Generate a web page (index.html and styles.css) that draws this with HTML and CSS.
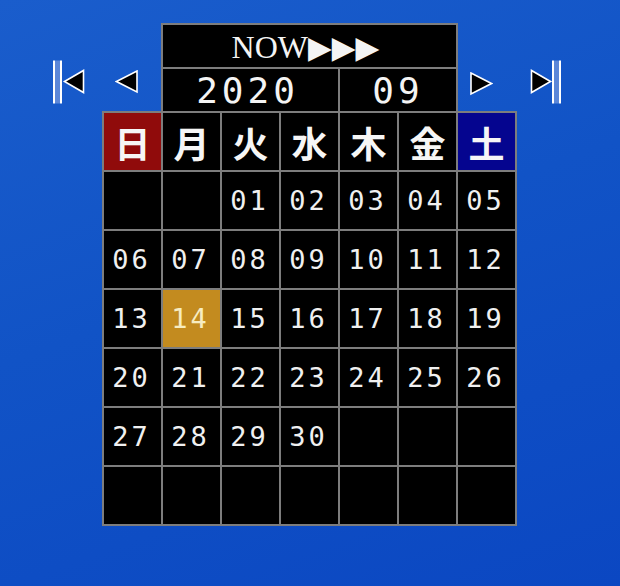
FILE: index.html
```html
<!DOCTYPE html>
<html lang="ja">
<head>
<meta charset="utf-8">
<title>Calendar</title>
<link rel="stylesheet" href="styles.css">
</head>
<body>
<div class="cal">
  <div class="top">
    <div class="nav nav-left">
      <svg class="skip" width="33" height="44" viewBox="0 0 33 44">
        <rect x="1" y="0.5" width="2" height="43" fill="#fff"/>
        <rect x="3" y="0.5" width="5" height="43" fill="#5c87d8"/>
        <rect x="8" y="0.5" width="2" height="43" fill="#fff"/>
        <polygon points="12.5,21.5 31.5,10.5 31.5,32.5" fill="#000" stroke="#fff" stroke-width="1.6" stroke-linejoin="miter"/>
      </svg>
      <svg class="step step-prev" width="24" height="24" viewBox="0 0 24 24">
        <polygon points="1.5,11.5 22,1 22,22" fill="#000" stroke="#fff" stroke-width="1.6"/>
      </svg>
    </div>
    <div class="box">
      <div class="cell now">NOW<span class="tri">▶▶▶</span></div>
      <div class="cell year">2020</div>
      <div class="cell month">09</div>
    </div>
    <div class="nav nav-right">
      <svg class="step step-next" width="24" height="24" viewBox="0 0 24 24">
        <polygon points="22.5,11.5 2,1 2,22" fill="#000" stroke="#fff" stroke-width="1.6"/>
      </svg>
      <svg class="skip skip-next" width="33" height="44" viewBox="0 0 33 44">
        <polygon points="20.5,21.5 1.5,10.5 1.5,32.5" fill="#000" stroke="#fff" stroke-width="1.6" stroke-linejoin="miter"/>
        <rect x="22" y="0.5" width="2" height="43" fill="#fff"/>
        <rect x="24" y="0.5" width="5" height="43" fill="#5c87d8"/>
        <rect x="29" y="0.5" width="2" height="43" fill="#fff"/>
      </svg>
    </div>
  </div>
  <div class="grid">
    <div class="wd sun">日</div>
    <div class="wd">月</div>
    <div class="wd">火</div>
    <div class="wd">水</div>
    <div class="wd">木</div>
    <div class="wd">金</div>
    <div class="wd sat">土</div>

    <div class="d"></div><div class="d"></div><div class="d">01</div><div class="d">02</div><div class="d">03</div><div class="d">04</div><div class="d">05</div>
    <div class="d">06</div><div class="d">07</div><div class="d">08</div><div class="d">09</div><div class="d">10</div><div class="d">11</div><div class="d">12</div>
    <div class="d">13</div><div class="d today">14</div><div class="d">15</div><div class="d">16</div><div class="d">17</div><div class="d">18</div><div class="d">19</div>
    <div class="d">20</div><div class="d">21</div><div class="d">22</div><div class="d">23</div><div class="d">24</div><div class="d">25</div><div class="d">26</div>
    <div class="d">27</div><div class="d">28</div><div class="d">29</div><div class="d">30</div><div class="d"></div><div class="d"></div><div class="d"></div>
    <div class="d"></div><div class="d"></div><div class="d"></div><div class="d"></div><div class="d"></div><div class="d"></div><div class="d"></div>
  </div>
</div>
</body>
</html>
```

FILE: styles.css
```css
html, body {
  margin: 0;
  padding: 0;
}
body {
  width: 620px;
  height: 586px;
  overflow: hidden;
  background: linear-gradient(160deg, #1a5dcc 0%, #1153c6 45%, #0b47c2 100%);
  font-family: "DejaVu Sans Mono", "Liberation Mono", monospace;
  color: #f2f2f2;
}
.cal {
  padding-top: 23px;
}
.top {
  display: flex;
  height: 88px;
}
.nav {
  display: flex;
  align-items: flex-start;
  box-sizing: border-box;
}
.nav-left {
  width: 161px;
  padding-left: 52px;
  padding-top: 37px;
}
.nav-left .step-prev {
  margin-left: 30px;
  margin-top: 10px;
}
.nav-right {
  padding-top: 37px;
}
.nav-right .step-next {
  margin-left: 11px;
  margin-top: 12px;
}
.nav-right .skip-next {
  margin-left: 37px;
}
.box {
  width: 297px;
  box-sizing: border-box;
  background: #7d7d7d;
  padding: 2px 2px 0;
  display: grid;
  grid-template-columns: 175px 116px;
  grid-template-rows: 42px 42px;
  gap: 2px;
}
.cell {
  background: #000;
  display: flex;
  align-items: center;
  justify-content: center;
  color: #f4f4f4;
}
.now {
  grid-column: 1 / -1;
  font-family: "Liberation Serif", "DejaVu Serif", serif;
  font-size: 32px;
  padding-right: 8px;
  padding-top: 2px;
  box-sizing: border-box;
}
.tri {
  font-family: "DejaVu Sans", sans-serif;
  font-size: 31px;
  letter-spacing: 0;
}
.year, .month {
  font-size: 36px;
  letter-spacing: 4px;
}
.year {
  padding-right: 6px;
}
.grid {
  margin-left: 102px;
  width: 415px;
  box-sizing: border-box;
  background: #7d7d7d;
  padding: 2px;
  display: grid;
  grid-template-columns: repeat(7, 57px);
  grid-auto-rows: 57px;
  gap: 2px;
}
.wd {
  background: #000;
  display: flex;
  align-items: center;
  justify-content: center;
  font-family: "Noto Sans CJK JP", "Noto Sans CJK SC", sans-serif;
  font-weight: 700;
  font-size: 36px;
  color: #f6f6f6;
}
.wd.sun {
  background: #900b0b;
}
.wd.sat {
  background: #05058f;
}
.d {
  background: #000;
  display: flex;
  align-items: center;
  justify-content: center;
  font-size: 27px;
  letter-spacing: 3px;
  padding-right: 2px;
  color: #f0f0f0;
}
.d.today {
  background: #c38b1f;
  color: #f7ecc0;
}
```
